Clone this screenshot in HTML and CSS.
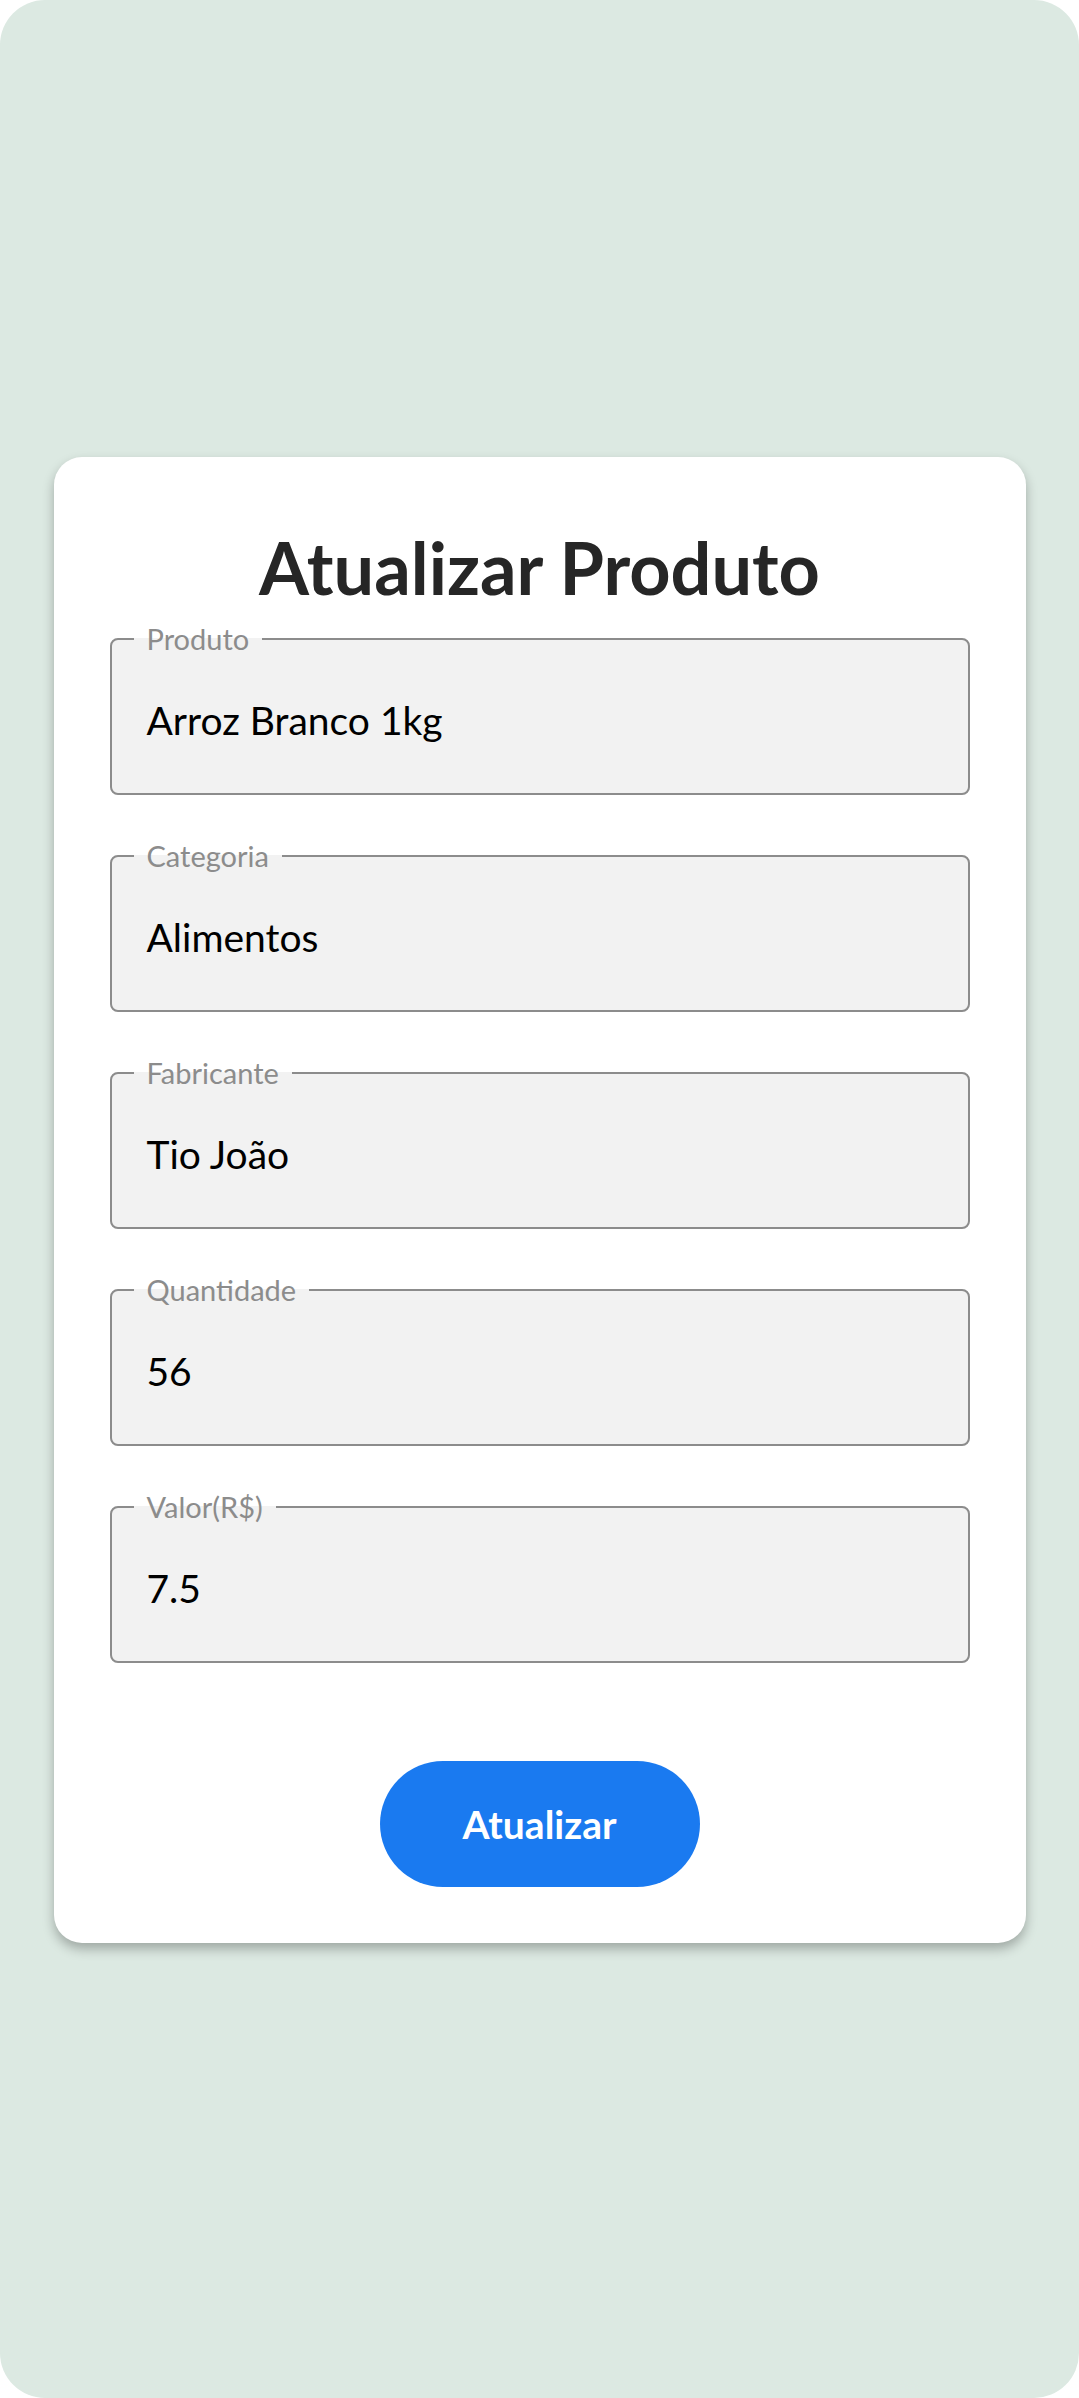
FILE: index.html
```html
<!DOCTYPE html>
<html lang="pt-BR">
<head>
<meta charset="utf-8">
<title>Atualizar Produto</title>
<link rel="stylesheet" href="styles.css">
</head>
<body>
<div class="screen">
  <form class="card">
    <h1 class="title">Atualizar Produto</h1>
    <div class="fields">
      <fieldset class="field">
        <legend class="field-label">Produto</legend>
        <div class="field-value">Arroz Branco 1kg</div>
      </fieldset>
      <fieldset class="field">
        <legend class="field-label">Categoria</legend>
        <div class="field-value">Alimentos</div>
      </fieldset>
      <fieldset class="field">
        <legend class="field-label">Fabricante</legend>
        <div class="field-value">Tio João</div>
      </fieldset>
      <fieldset class="field">
        <legend class="field-label">Quantidade</legend>
        <div class="field-value">56</div>
      </fieldset>
      <fieldset class="field">
        <legend class="field-label">Valor(R$)</legend>
        <div class="field-value">7.5</div>
      </fieldset>
    </div>
    <button type="button" class="btn">Atualizar</button>
  </form>
</div>
</body>
</html>
```
FILE: styles.css
```css
html, body {
  margin: 0;
  padding: 0;
  background: #ffffff;
}
body {
  font-family: Lato, "Open Sans", sans-serif;
}
.screen {
  width: 1079px;
  height: 2398px;
  background: #dce9e2;
  border-radius: 45px;
  display: flex;
  flex-direction: column;
  align-items: center;
  overflow: hidden;
}
.card {
  margin-top: 457px;
  width: 972px;
  height: 1486px;
  box-sizing: border-box;
  background: #ffffff;
  border-radius: 28px;
  padding: 66px 56px 0;
  box-shadow: 0 6px 12px rgba(0, 0, 0, 0.28);
  display: flex;
  flex-direction: column;
  align-items: center;
}
.title {
  margin: 0 0 11px;
  font-size: 72px;
  line-height: 88px;
  font-weight: 700;
  color: #262626;
  text-align: center;
}
.fields {
  width: 100%;
  display: flex;
  flex-direction: column;
  gap: 44px;
}
.field {
  margin: 0;
  padding: 0;
  border: 2px solid #8c8c8c;
  border-radius: 8px;
  background: #f2f2f2;
  min-width: 0;
  box-sizing: border-box;
  height: 173px;
  flex: none;
}
.field-label {
  margin-left: 22px;
  padding: 0 13px;
  font-size: 29px;
  line-height: 34px;
  color: #8c8c8c;
}
.field-value {
  padding: 41px 35px 0;
  font-size: 39px;
  line-height: 46px;
  color: #000000;
}
.btn {
  margin-top: 98px;
  width: 320px;
  height: 126px;
  flex: none;
  border: none;
  border-radius: 63px;
  background: #1a7af0;
  color: #ffffff;
  font-family: Lato, "Open Sans", sans-serif;
  font-size: 39px;
  font-weight: 700;
  padding: 0;
}
```
